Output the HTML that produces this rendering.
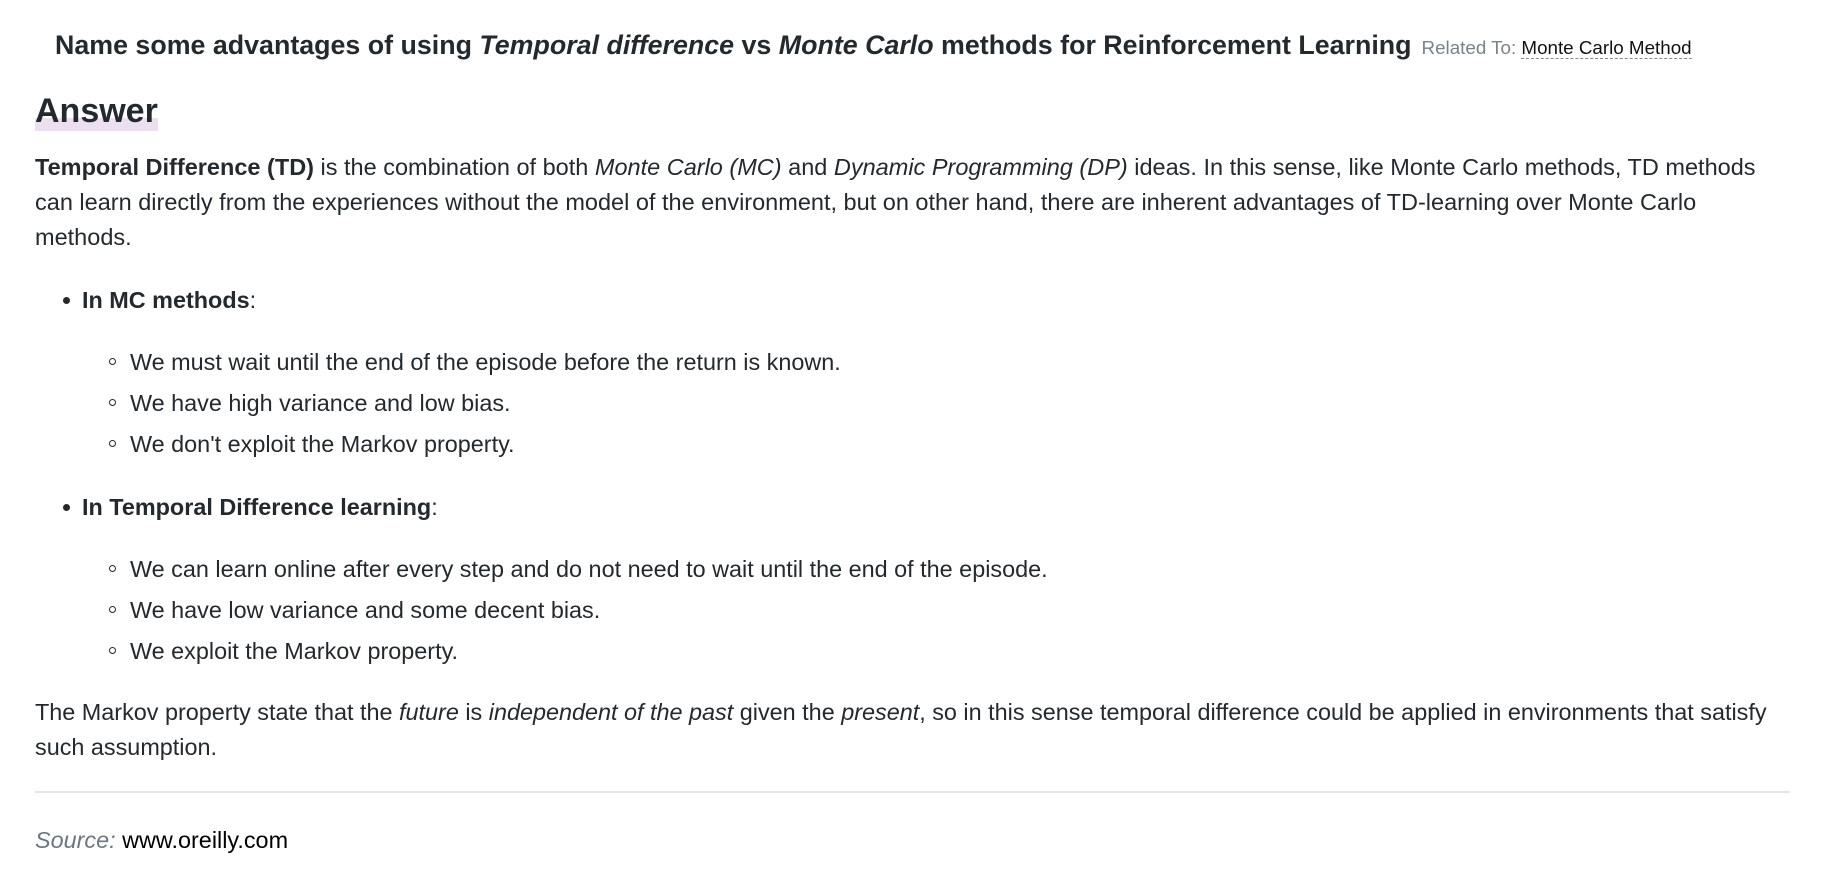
<!DOCTYPE html>
<html><head><meta charset="utf-8"><style>
body{margin:0;background:#fff;font-family:"Liberation Sans",Arial,sans-serif;color:#24292e;width:1828px;height:870px;overflow:hidden}
.title{position:absolute;left:55px;top:28px;font-size:26.8px;font-weight:bold;white-space:nowrap;line-height:34px}
.rel{font-size:18.8px;font-weight:normal;color:#7a828a;margin-left:10px}
.rel a{color:#111;text-decoration:none;border-bottom:1.5px dashed #888}
h2{position:absolute;left:35px;top:91px;margin:0;font-size:34px;line-height:40px;font-weight:bold;background:linear-gradient(transparent 68%,#ecdff0 68%)}
.p1{position:absolute;left:35px;top:150px;margin:0;font-size:23.5px;line-height:35px;white-space:nowrap}
.b{position:absolute;left:82px;font-size:23.4px;line-height:35px}
.b:before{content:"";position:absolute;left:-19px;top:14px;width:7px;height:7px;border-radius:50%;background:#24292e}
.s{position:absolute;left:130px;font-size:23.4px;line-height:35px;white-space:nowrap}
.s:before{content:"";position:absolute;left:-21px;top:13px;width:7px;height:7px;border-radius:50%;border:1.3px solid #24292e;box-sizing:border-box}
.p2{position:absolute;left:35px;top:695px;margin:0;font-size:23.4px;line-height:35px;white-space:nowrap}
hr{position:absolute;left:35px;top:791px;width:1755px;border:0;border-top:2px solid #e6e6e6;margin:0}
.src{position:absolute;left:35px;top:823px;font-size:23.4px;line-height:35px;color:#000}
.src i{color:#6c7780}
</style></head><body>
<div class="title">Name some advantages of using <i>Temporal difference</i> vs <i>Monte Carlo</i> methods for Reinforcement Learning<span class="rel">Related To: <a>Monte Carlo Method</a></span></div>
<h2>Answer</h2>
<p class="p1"><b>Temporal Difference (TD)</b> is the combination of both <i>Monte Carlo (MC)</i> and <i>Dynamic Programming (DP)</i> ideas. In this sense, like Monte Carlo methods, TD methods<br>can learn directly from the experiences without the model of the environment, but on other hand, there are inherent advantages of TD-learning over Monte Carlo<br>methods.</p>
<div class="b" style="top:283px"><b>In MC methods</b>:</div>
<div class="s" style="top:345px">We must wait until the end of the episode before the return is known.</div>
<div class="s" style="top:386px">We have high variance and low bias.</div>
<div class="s" style="top:427px">We don't exploit the Markov property.</div>
<div class="b" style="top:490px"><b>In Temporal Difference learning</b>:</div>
<div class="s" style="top:552px">We can learn online after every step and do not need to wait until the end of the episode.</div>
<div class="s" style="top:593px">We have low variance and some decent bias.</div>
<div class="s" style="top:634px">We exploit the Markov property.</div>
<p class="p2">The Markov property state that the <i>future</i> is <i>independent of the past</i> given the <i>present</i>, so in this sense temporal difference could be applied in environments that satisfy<br>such assumption.</p>
<hr>
<div class="src"><i>Source:</i> www.oreilly.com</div>
</body></html>
